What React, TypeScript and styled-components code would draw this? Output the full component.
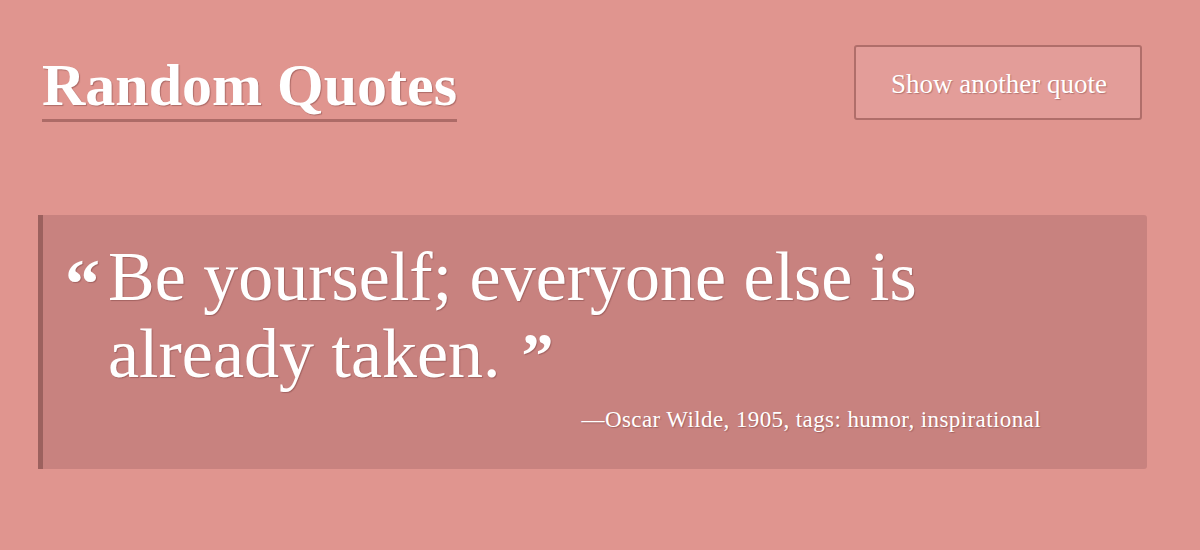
import React from "react";
import styled, { createGlobalStyle } from "styled-components";

const Global = createGlobalStyle`
  html, body { margin: 0; padding: 0; background: #e0958f; }
  body { font-family: "Liberation Serif", "DejaVu Serif", serif; color: #fff; }
`;

const Page = styled.div`
  width: 1200px;
  height: 550px;
  box-sizing: border-box;
  padding: 45px 53px 0 38px;
  display: flex;
  flex-direction: column;
`;

const Header = styled.header`
  display: flex;
  justify-content: space-between;
  align-items: flex-start;
`;

const Title = styled.h1`
  margin: 8px 0 0 4px;
  font-size: 60px;
  font-weight: 700;
  line-height: 64px;
  padding-bottom: 2px;
  border-bottom: 3px solid #ad6b67;
  text-shadow: 1px 1px 1px rgba(80, 30, 30, 0.35);
`;

const Button = styled.button`
  width: 288px;
  height: 75px;
  margin-right: 5px;
  padding: 4px 0 0 2px;
  background: #e39d99;
  border: 2px solid #b06e6a;
  border-radius: 3px;
  color: #fff;
  font-family: inherit;
  font-size: 27px;
  text-shadow: 1px 1px 1px rgba(80, 30, 30, 0.3);
  cursor: pointer;
`;

const Box = styled.blockquote`
  margin: 93px 0 0 0;
  width: 1109px;
  height: 254px;
  box-sizing: border-box;
  background: #c8827f;
  border-left: 5px solid #9c615e;
  border-radius: 0 3px 3px 0;
  padding: 23px 106px 0 22px;
  display: flex;
  flex-direction: column;
`;

const QuoteRow = styled.div`
  display: flex;
  align-items: flex-start;
`;

const Mark = styled.span`
  font-weight: 700;
  font-size: 70px;
  text-shadow: 1px 1px 1px rgba(80, 30, 30, 0.3);
`;

const OpenMark = styled(Mark)`
  width: 43px;
  flex: none;
  line-height: 1;
  margin-top: 11px;
`;

const CloseMark = styled(Mark)`
  margin-left: 21px;
  font-size: 64px;
  line-height: 0;
`;

const QuoteText = styled.p`
  margin: 0;
  font-size: 70px;
  line-height: 77px;
  text-shadow: 1px 1px 1px rgba(80, 30, 30, 0.3);
  max-width: 860px;
`;

const Author = styled.footer`
  margin-top: 15px;
  text-align: right;
  font-size: 23px;
  letter-spacing: 0.4px;
  text-shadow: 1px 1px 1px rgba(80, 30, 30, 0.3);
`;

export default function App() {
  return (
    <>
      <Global />
      <Page>
        <Header>
          <Title>Random Quotes</Title>
          <Button>Show another quote</Button>
        </Header>
        <Box>
          <QuoteRow>
            <OpenMark>“</OpenMark>
            <QuoteText>
              Be yourself; everyone else is already taken.
              <CloseMark>”</CloseMark>
            </QuoteText>
          </QuoteRow>
          <Author>—Oscar Wilde, 1905, tags: humor, inspirational</Author>
        </Box>
      </Page>
    </>
  );
}
